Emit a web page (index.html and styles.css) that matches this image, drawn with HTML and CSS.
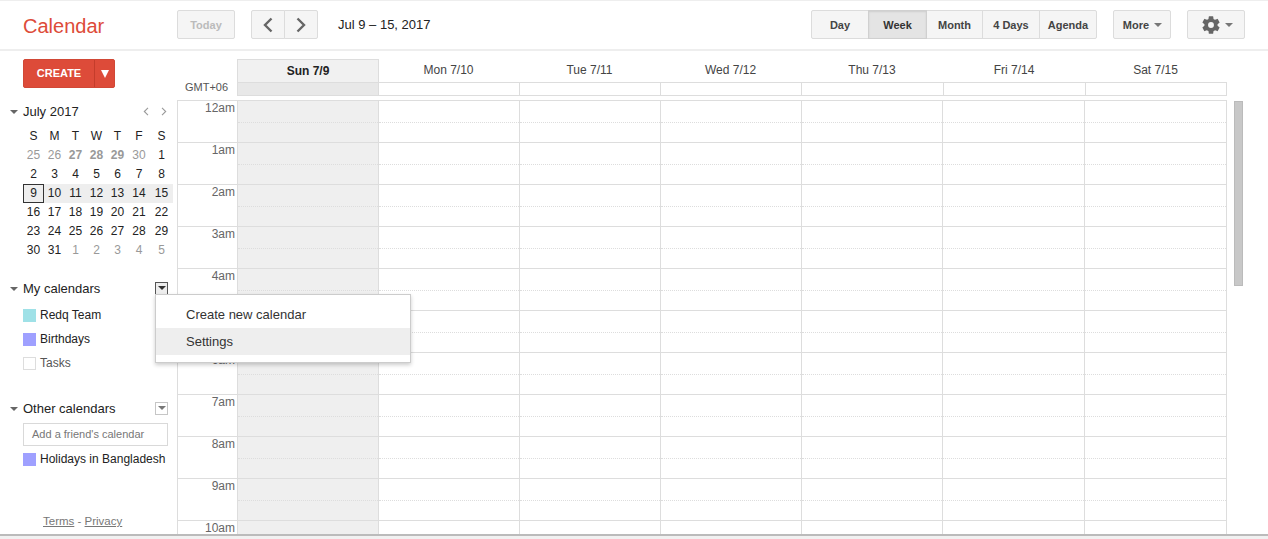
FILE: index.html
```html
<!DOCTYPE html>
<html lang="en">
<head>
    <meta charset="UTF-8">
    <title>Calendar - Week of Jul 9, 2017</title>
    <link rel="stylesheet" href="styles.css">
</head>
<body>
    <!-- Top bar -->
    <header class="topbar">
        <div class="logo">Calendar</div>
        <button class="btn btn-today">Today</button>
        <div class="btn-group nav-group">
            <button class="btn btn-nav">
                <svg width="10" height="16" viewBox="0 0 10 16"><path d="M8.5 1.5 2 8l6.5 6.5" fill="none" stroke="#666" stroke-width="2.4"/></svg>
            </button>
            <button class="btn btn-nav">
                <svg width="10" height="16" viewBox="0 0 10 16"><path d="M1.5 1.5 8 8l-6.5 6.5" fill="none" stroke="#666" stroke-width="2.4"/></svg>
            </button>
        </div>
        <div class="date-range">Jul 9 – 15, 2017</div>
        <div class="btn-group view-group">
            <button class="btn btn-view btn-day">Day</button>
            <button class="btn btn-view btn-week active">Week</button>
            <button class="btn btn-view btn-month">Month</button>
            <button class="btn btn-view btn-4days">4 Days</button>
            <button class="btn btn-view btn-agenda">Agenda</button>
        </div>
        <button class="btn btn-more">More <span class="caret"></span></button>
        <button class="btn btn-gear">
            <svg width="22" height="22" viewBox="0 0 24 24"><path fill="#666" d="M19.14 12.94c.04-.3.06-.61.06-.94s-.02-.64-.07-.94l2.03-1.58a.49.49 0 0 0 .12-.61l-1.92-3.32a.49.49 0 0 0-.59-.22l-2.39.96a7 7 0 0 0-1.62-.94l-.36-2.54a.48.48 0 0 0-.48-.41h-3.84a.48.48 0 0 0-.47.41l-.36 2.54c-.59.24-1.13.57-1.62.94l-2.39-.96a.48.48 0 0 0-.59.22L2.74 8.87a.48.48 0 0 0 .12.61l2.03 1.58c-.05.3-.09.63-.09.94s.02.64.07.94l-2.03 1.58a.49.49 0 0 0-.12.61l1.92 3.32c.12.22.37.29.59.22l2.39-.96c.5.38 1.03.7 1.62.94l.36 2.54c.05.24.24.41.48.41h3.84c.24 0 .44-.17.47-.41l.36-2.54a7 7 0 0 0 1.62-.94l2.39.96c.22.08.47 0 .59-.22l1.92-3.32a.48.48 0 0 0-.12-.61l-2.01-1.58zM12 15.2a3.2 3.2 0 1 1 0-6.4 3.2 3.2 0 0 1 0 6.4z"/></svg>
            <span class="caret"></span>
        </button>
    </header>

    <div class="main">
        <!-- Left column -->
        <aside class="sidebar">
            <div class="create-btn">
                <span class="create-label">CREATE</span>
                <span class="create-arrow"></span>
            </div>

            <div class="side-head mini-head">
                <span class="fold"></span>
                <span class="side-title">July 2017</span>
                <span class="mini-nav">
                    <svg width="6" height="9" viewBox="0 0 6 9"><path d="M5 .8 1.3 4.5 5 8.2" fill="none" stroke="#999" stroke-width="1.1"/></svg>
                    <svg width="6" height="9" viewBox="0 0 6 9"><path d="M1 .8l3.7 3.7L1 8.2" fill="none" stroke="#999" stroke-width="1.1"/></svg>
                </span>
            </div>

            <!-- Mini month -->
            <div class="mini-month">
                <div class="dow">S</div><div class="dow">M</div><div class="dow">T</div><div class="dow">W</div><div class="dow">T</div><div class="dow">F</div><div class="dow">S</div>
                <div class="d off">25</div><div class="d off">26</div><div class="d off busy">27</div><div class="d off busy">28</div><div class="d off busy">29</div><div class="d off">30</div><div class="d">1</div>
                <div class="d">2</div><div class="d">3</div><div class="d">4</div><div class="d">5</div><div class="d">6</div><div class="d">7</div><div class="d">8</div>
                <div class="d wk today">9</div><div class="d wk">10</div><div class="d wk">11</div><div class="d wk">12</div><div class="d wk">13</div><div class="d wk">14</div><div class="d wk">15</div>
                <div class="d">16</div><div class="d">17</div><div class="d">18</div><div class="d">19</div><div class="d">20</div><div class="d">21</div><div class="d">22</div>
                <div class="d">23</div><div class="d">24</div><div class="d">25</div><div class="d">26</div><div class="d">27</div><div class="d">28</div><div class="d">29</div>
                <div class="d">30</div><div class="d">31</div><div class="d off">1</div><div class="d off">2</div><div class="d off">3</div><div class="d off">4</div><div class="d off">5</div>
            </div>

            <!-- My calendars -->
            <div class="side-head my-head">
                <span class="fold"></span>
                <span class="side-title">My calendars</span>
                <span class="drop-box open"><span class="caret"></span></span>
                <div class="menu">
                    <div class="menu-item">Create new calendar</div>
                    <div class="menu-item hover">Settings</div>
                </div>
            </div>
            <div class="cal-item"><span class="swatch teal"></span>Redq Team</div>
            <div class="cal-item"><span class="swatch purple"></span>Birthdays</div>
            <div class="cal-item muted"><span class="swatch empty"></span>Tasks</div>

            <!-- Other calendars -->
            <div class="side-head other-head">
                <span class="fold"></span>
                <span class="side-title">Other calendars</span>
                <span class="drop-box"><span class="caret"></span></span>
            </div>
            <div class="friend-input">Add a friend's calendar</div>
            <div class="cal-item holiday"><span class="swatch purple"></span>Holidays in Bangladesh</div>

            <div class="terms"><a>Terms</a> - <a>Privacy</a></div>
        </aside>

        <!-- Week view -->
        <section class="week">
            <div class="day-heads">
                <div></div>
                <div class="day-head sunday">Sun 7/9</div>
                <div class="day-head">Mon 7/10</div>
                <div class="day-head">Tue 7/11</div>
                <div class="day-head">Wed 7/12</div>
                <div class="day-head">Thu 7/13</div>
                <div class="day-head">Fri 7/14</div>
                <div class="day-head">Sat 7/15</div>
            </div>
            <div class="day-heads allday">
                <div class="gmt">GMT+06</div>
                <div class="allday-cell sunday"></div>
                <div class="allday-cell"></div>
                <div class="allday-cell"></div>
                <div class="allday-cell"></div>
                <div class="allday-cell"></div>
                <div class="allday-cell"></div>
                <div class="allday-cell"></div>
            </div>
            <div class="hours">
                <div class="hour"><div class="time">12am</div><div class="cell sun"></div><div class="cell"></div><div class="cell"></div><div class="cell"></div><div class="cell"></div><div class="cell"></div><div class="cell"></div></div>
                <div class="hour"><div class="time">1am</div><div class="cell sun"></div><div class="cell"></div><div class="cell"></div><div class="cell"></div><div class="cell"></div><div class="cell"></div><div class="cell"></div></div>
                <div class="hour"><div class="time">2am</div><div class="cell sun"></div><div class="cell"></div><div class="cell"></div><div class="cell"></div><div class="cell"></div><div class="cell"></div><div class="cell"></div></div>
                <div class="hour"><div class="time">3am</div><div class="cell sun"></div><div class="cell"></div><div class="cell"></div><div class="cell"></div><div class="cell"></div><div class="cell"></div><div class="cell"></div></div>
                <div class="hour"><div class="time">4am</div><div class="cell sun"></div><div class="cell"></div><div class="cell"></div><div class="cell"></div><div class="cell"></div><div class="cell"></div><div class="cell"></div></div>
                <div class="hour"><div class="time">5am</div><div class="cell sun"></div><div class="cell"></div><div class="cell"></div><div class="cell"></div><div class="cell"></div><div class="cell"></div><div class="cell"></div></div>
                <div class="hour"><div class="time">6am</div><div class="cell sun"></div><div class="cell"></div><div class="cell"></div><div class="cell"></div><div class="cell"></div><div class="cell"></div><div class="cell"></div></div>
                <div class="hour"><div class="time">7am</div><div class="cell sun"></div><div class="cell"></div><div class="cell"></div><div class="cell"></div><div class="cell"></div><div class="cell"></div><div class="cell"></div></div>
                <div class="hour"><div class="time">8am</div><div class="cell sun"></div><div class="cell"></div><div class="cell"></div><div class="cell"></div><div class="cell"></div><div class="cell"></div><div class="cell"></div></div>
                <div class="hour"><div class="time">9am</div><div class="cell sun"></div><div class="cell"></div><div class="cell"></div><div class="cell"></div><div class="cell"></div><div class="cell"></div><div class="cell"></div></div>
                <div class="hour"><div class="time">10am</div><div class="cell sun"></div><div class="cell"></div><div class="cell"></div><div class="cell"></div><div class="cell"></div><div class="cell"></div><div class="cell"></div></div>
            </div>
        </section>

        <div class="scrollbar"><div class="thumb"></div></div>
    </div>

    <div class="bottom-bar"></div>
</body>
</html>
```

FILE: styles.css
```css
/* Reset */
* {
    margin: 0;
    padding: 0;
    box-sizing: border-box;
}
html, body {
    height: 539px;
    overflow: hidden;
}
body {
    font-family: "Liberation Sans", Arial, sans-serif;
    font-size: 12px;
    color: #222;
    background: #fff;
}

/* Top bar */
.topbar {
    height: 51px;
    display: flex;
    align-items: flex-start;
    padding-top: 9px;
    border-top: 1px solid #eee;
    border-bottom: 2px solid #eee;
}
.topbar > .logo {
    width: 154px;
    margin-left: 23px;
    margin-top: 4px;
    font-size: 20px;
    line-height: 24px;
    color: #dd4b39;
}
.btn {
    height: 29px;
    font-family: inherit;
    font-size: 11px;
    font-weight: bold;
    color: #444;
    background: #f5f5f5;
    border: 1px solid #dcdcdc;
    border-radius: 2px;
    display: flex;
    align-items: center;
    justify-content: center;
}
.btn-today {
    width: 58px;
    color: #bbb;
    margin-right: 16px;
}
.btn-group {
    display: flex;
}
.btn-group .btn {
    border-radius: 0;
    margin-left: -1px;
}
.btn-group .btn:first-child {
    margin-left: 0;
    border-radius: 2px 0 0 2px;
}
.btn-group .btn:last-child {
    border-radius: 0 2px 2px 0;
}
.btn-nav {
    width: 34px;
}
.date-range {
    width: 473px;
    margin-left: 20px;
    font-size: 13px;
    line-height: 30px;
    color: #222;
}
.btn-day { width: 58px; }
.btn-week { width: 59px; }
.btn-month { width: 57px; }
.btn-4days { width: 58px; }
.btn-agenda { width: 58px; }
.btn.active {
    background: #e4e4e4;
    border-color: #d0d0d0;
    box-shadow: inset 0 1px 2px rgba(0, 0, 0, 0.1);
    color: #333;
    position: relative;
}
.btn-more {
    width: 58px;
    margin-left: 16px;
    padding-left: 1px;
    gap: 5px;
}
.btn-gear {
    width: 58px;
    margin-left: 16px;
    gap: 3px;
}
.caret {
    display: inline-block;
    width: 0;
    height: 0;
    border-left: 4px solid transparent;
    border-right: 4px solid transparent;
    border-top: 4px solid #777;
}

/* Main area */
.main {
    height: 483px;
    display: flex;
    overflow: hidden;
}
.sidebar {
    width: 177px;
    flex: none;
    display: flex;
    flex-direction: column;
    padding-top: 8px;
}
.create-btn {
    width: 92px;
    height: 29px;
    margin-left: 23px;
    display: flex;
    background: #dd4b39;
    border: 1px solid #d14836;
    border-radius: 2px;
    color: #fff;
    font-size: 11px;
    font-weight: bold;
}
.create-label {
    width: 71px;
    line-height: 27px;
    text-align: center;
    border-right: 1px solid #c43c2b;
}
.create-arrow {
    width: 0;
    height: 0;
    margin: 10px 0 0 6px;
    border-left: 4px solid transparent;
    border-right: 4px solid transparent;
    border-top: 8px solid #fff;
}

/* Sidebar headings */
.side-head {
    position: relative;
    display: flex;
    align-items: center;
    height: 18px;
    padding-left: 10px;
}
.fold {
    width: 0;
    height: 0;
    margin-top: 2px;
    margin-right: 5px;
    border-left: 4px solid transparent;
    border-right: 4px solid transparent;
    border-top: 4px solid #666;
}
.side-title {
    font-size: 13px;
    color: #222;
}
.mini-head {
    margin-top: 14px;
}
.mini-nav {
    margin-left: auto;
    margin-right: 10px;
    display: flex;
    gap: 12px;
}
.mini-month {
    width: 150px;
    margin-left: 23px;
    margin-top: 7px;
    display: grid;
    grid-template-columns: 21px 21px 21px 21px 21px 22px 23px;
    grid-auto-rows: 19px;
    text-align: center;
    line-height: 19px;
    color: #222;
}
.d.off {
    color: #999;
}
.d.busy {
    font-weight: bold;
}
.d.wk {
    background: #eee;
}
.d.today {
    border: 1px solid #333;
    line-height: 17px;
}
.my-head {
    margin-top: 19px;
}
.other-head {
    margin-top: 24px;
}
.drop-box {
    margin-left: auto;
    margin-right: 9px;
    width: 13px;
    height: 13px;
    border: 1px solid #c6c6c6;
    display: flex;
    align-items: center;
    justify-content: center;
}
.drop-box .caret {
    border-left-width: 4px;
    border-right-width: 4px;
}
.drop-box.open {
    border-color: #555;
    background: #eee;
}
.drop-box.open .caret {
    border-top-color: #333;
}

/* Open menu */
.menu {
    position: absolute;
    z-index: 5;
    top: 15px;
    left: 155px;
    width: 256px;
    height: 69px;
    padding-top: 6px;
    background: #fff;
    border: 1px solid #ccc;
    box-shadow: 0 2px 4px rgba(0, 0, 0, 0.2);
}
.menu-item {
    height: 27px;
    padding-left: 30px;
    font-size: 13px;
    line-height: 27px;
    color: #333;
}
.menu-item.hover {
    background: #eee;
}

/* Calendar list */
.cal-item {
    display: flex;
    align-items: center;
    height: 24px;
    margin-left: 23px;
    color: #222;
}
.cal-item.muted {
    color: #555;
}
.my-head + .cal-item {
    margin-top: 6px;
}
.cal-item.holiday {
    margin-top: 1px;
}
.swatch {
    width: 13px;
    height: 13px;
    margin-right: 4px;
    flex: none;
}
.teal { background: #9fe1e7; }
.purple { background: #9fa0ff; }
.empty { border: 1px solid #ddd; }
.friend-input {
    width: 145px;
    height: 23px;
    margin-left: 23px;
    margin-top: 6px;
    padding-left: 8px;
    border: 1px solid #d9d9d9;
    font-size: 11px;
    line-height: 21px;
    color: #777;
}
.terms {
    margin-top: auto;
    margin-bottom: 6px;
    padding-left: 43px;
    font-size: 11.5px;
    line-height: 13px;
    color: #777;
}
.terms a {
    text-decoration: underline;
}

/* Week grid */
.week {
    width: 1050px;
    flex: none;
    padding-top: 8px;
}
.day-heads {
    display: grid;
    grid-template-columns: 60px 142px 141px 141px 141px 142px 142px 141px;
}
.day-head {
    height: 23px;
    padding-right: 2px;
    text-align: center;
    line-height: 23px;
    color: #444;
}
.day-head.sunday {
    padding-right: 0;
    background: #f1f1f1;
    border: 1px solid #ddd;
    border-bottom: none;
    font-weight: bold;
    color: #222;
}
.allday {
    height: 14px;
    margin-bottom: 4px;
}
.gmt {
    padding-left: 8px;
    font-size: 11px;
    line-height: 10px;
    color: #555;
    white-space: nowrap;
}
.allday-cell {
    border: 1px solid #ddd;
    border-left: none;
}
.allday-cell.sunday {
    background: #e8e8e8;
    border-left: 1px solid #ddd;
}
.hours {
    border-top: 1px solid #ddd;
    border-left: 1px solid #ddd;
}
.hour {
    display: grid;
    grid-template-columns: 60px 141px 141px 141px 141px 141px 142px 142px;
    height: 42px;
}
.time {
    text-align: right;
    padding-right: 2px;
    line-height: 15px;
    color: #666;
    border-right: 1px solid #ddd;
    border-bottom: 1px solid #ddd;
}
.cell {
    border-right: 1px solid #ddd;
    border-bottom: 1px solid #ddd;
}
.cell::before {
    content: "";
    display: block;
    height: 21px;
    border-bottom: 1px dotted #ddd;
}
.cell.sun {
    background: #efefef;
}

/* Scrollbar */
.scrollbar {
    margin-left: 7px;
    padding-top: 50px;
}
.thumb {
    width: 9px;
    height: 185px;
    background: #c8c8c8;
    border: 1px solid #bbb;
}

.bottom-bar {
    height: 5px;
    background: #f1f1f1;
    border-top: 2px solid #bbb;
}
```
